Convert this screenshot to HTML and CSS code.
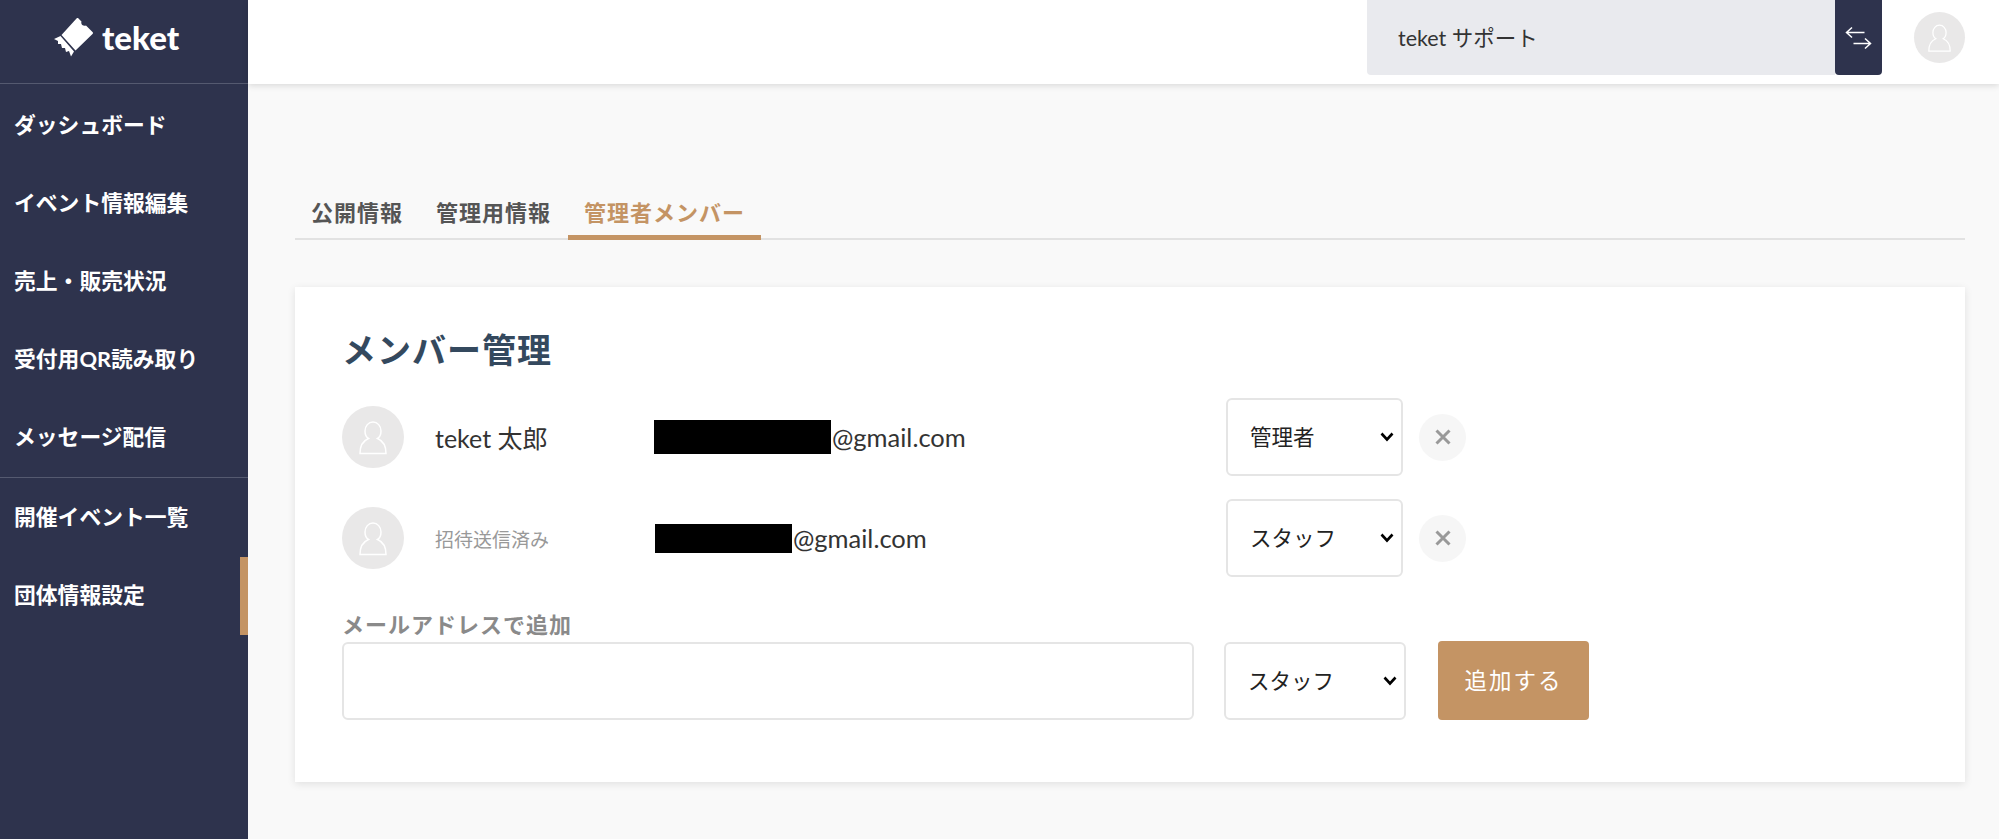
FILE: index.html
```html
<!DOCTYPE html>
<html lang="ja">
<head>
<meta charset="UTF-8">
<title>teket</title>
<link rel="stylesheet" href="styles.css">
</head>
<body>
<svg class="sprites">
    <symbol id="icon-user" viewBox="0 0 62 62">
        <path d="M26.5 32.5 C24 31 23 28 23 25 C23 20 26.5 16 31 16 C35.5 16 39 20 39 25 C39 28 38 31 35.5 32.5 C41.5 35 44 40 44 47.5 H18 C18 40 20.5 35 26.5 32.5 Z" fill="none" stroke="#fff" stroke-width="1.5"/>
    </symbol>
    <symbol id="icon-close" viewBox="0 0 16 16">
        <path d="M1.5 1.5 L14.5 14.5 M14.5 1.5 L1.5 14.5" stroke="#999" stroke-width="3"/>
    </symbol>
</svg>

<div class="app">
    <!-- sidebar -->
    <aside class="sidebar">
        <div class="logo">
            <svg class="logo-mark" viewBox="0 0 39 39">
                <path d="M24 0 L27.5 3.5 C26.5 6 29 8.5 32 7.5 L38.5 14 Q39.5 15 38.5 16 L21.5 32.5 L7.5 17 L22.5 0.5 Q23.2 -0.3 24 0 Z" fill="#fff"/>
                <path d="M6.5 18 L20 33.5 L17 38.5 L15 33 L12 34 L11 30 L8 30 L7 26 L4 26 L4 23 L0 21 Z" fill="#fff"/>
            </svg>
            <span class="logo-text">teket</span>
        </div>
        <nav class="nav">
            <a class="nav-item">ダッシュボード</a>
            <a class="nav-item">イベント情報編集</a>
            <a class="nav-item">売上・販売状況</a>
            <a class="nav-item">受付用QR読み取り</a>
            <a class="nav-item">メッセージ配信</a>
        </nav>
        <nav class="nav nav-sub">
            <a class="nav-item">開催イベント一覧</a>
            <a class="nav-item active">団体情報設定</a>
        </nav>
    </aside>

    <div class="main">
        <header class="topbar">
            <div class="org-select">teket サポート</div>
            <button class="org-switch">
                <svg viewBox="0 0 27 26"><path d="M7 2.5 L1.5 7.5 L7 12.5 M1.5 7.5 H19.5 M20 13.5 L25.5 18.5 L20 23.5 M25.5 18.5 H8.5" fill="none" stroke="#fff" stroke-width="1.5"/></svg>
            </button>
            <div class="avatar avatar-small"><svg><use href="#icon-user"/></svg></div>
        </header>

        <main class="content">
            <div class="tabs">
                <a class="tab">公開情報</a>
                <a class="tab">管理用情報</a>
                <a class="tab active">管理者メンバー</a>
            </div>

            <section class="card">
                <h1 class="card-title">メンバー管理</h1>

                <div class="member">
                    <div class="avatar"><svg><use href="#icon-user"/></svg></div>
                    <div class="member-name">teket 太郎</div>
                    <div class="member-mail"><span class="mask mask-long"></span>@gmail.com</div>
                    <select class="role"><option>管理者</option><option>スタッフ</option></select>
                    <button class="remove"><svg><use href="#icon-close"/></svg></button>
                </div>

                <div class="member">
                    <div class="avatar"><svg><use href="#icon-user"/></svg></div>
                    <div class="member-name pending">招待送信済み</div>
                    <div class="member-mail"><span class="mask mask-short"></span>@gmail.com</div>
                    <select class="role"><option>スタッフ</option><option>管理者</option></select>
                    <button class="remove"><svg><use href="#icon-close"/></svg></button>
                </div>

                <label class="add-label">メールアドレスで追加</label>
                <div class="add-row">
                    <input class="add-input" type="text">
                    <select class="role role-add"><option>スタッフ</option><option>管理者</option></select>
                    <button class="add-btn">追加する</button>
                </div>
            </section>
        </main>
    </div>
</div>
</body>
</html>
```
FILE: styles.css
```css
:root{
    --navy:#2e334d;
    --accent:#c49464;
    --line:#e5e5e5;
}

*{margin:0;padding:0;box-sizing:border-box}
html,body{height:100%;overflow:hidden}
body{
    font-family:Lato,"Noto Sans CJK JP",sans-serif;
    color:#333;
    background:#f9f9f9;
}
.sprites{display:none}

.app{
    display:flex;
    height:839px;
}

/* sidebar -------------- */
.sidebar{
    flex:0 0 248px;
    background:var(--navy);
}
.logo{
    height:84px;
    display:flex;
    align-items:center;
    gap:9px;
    padding:0 0 8px 54px;
    border-bottom:1px solid #555a70;
}
.logo-mark{width:39px;height:39px}
.logo-text{
    font-size:33px;
    font-weight:900;
    color:#fff;
    line-height:1;
}
.nav{
    padding-bottom:3px;
    border-bottom:1px solid #555a70;
}
.nav-sub{
    margin-top:-2px;
    padding-bottom:0;
    border-bottom:0;
}
.nav-item{
    display:flex;
    align-items:center;
    height:78px;
    padding-left:14px;
    font-size:21.8px;
    font-weight:700;
    color:#fff;
}
.nav-item.active{
    margin-top:3px;
    padding-bottom:6px;
    border-right:8px solid var(--accent);
}

/* header --------------- */
.main{
    flex:1;
    min-width:0;
}
.topbar{
    height:84px;
    background:#fff;
    display:flex;
    align-items:flex-start;
    padding-left:1119px;
    box-shadow:0 2px 6px rgba(0,0,0,.12);
}
.org-select{
    width:468px;
    height:75px;
    padding:0 0 2px 31px;
    display:flex;
    align-items:center;
    font-size:21.5px;
    color:#333;
    background:#e9eaee;
    border-radius:0 0 0 4px;
}
.org-switch{
    width:47px;
    height:75px;
    border:0;
    border-radius:0 0 4px 4px;
    background:var(--navy);
    display:flex;
    align-items:center;
    justify-content:center;
}
.org-switch svg{width:27px;height:26px}
.avatar{
    flex:0 0 62px;
    width:62px;
    height:62px;
    border-radius:50%;
    background:#e9e8e8;
}
.avatar svg{display:block;width:100%;height:100%}
.avatar-small{
    flex:0 0 51px;
    width:51px;
    height:51px;
    margin:12px 0 0 32px;
}

/* content -------------- */
.content{
    padding:106px 34px 0 47px;
}
.tabs{
    display:flex;
    gap:1px;
    height:50px;
    border-bottom:2px solid #e2e2e2;
}
.tab{
    height:50px;
    padding:0 16px 3px;
    display:flex;
    align-items:center;
    border-bottom:5px solid transparent;
    font-size:22px;
    font-weight:700;
    letter-spacing:1px;
    color:#555;
}
.tab.active{
    color:var(--accent);
    border-bottom-color:var(--accent);
}

.card{
    margin-top:47px;
    height:495px;
    padding:40px 47px;
    background:#fff;
    box-shadow:0 2px 8px rgba(0,0,0,.1);
}
.card-title{
    font-size:34px;
    font-weight:700;
    letter-spacing:1px;
    line-height:46px;
    color:#34495e;
    margin-bottom:25px;
}

.member{
    display:flex;
    align-items:center;
    height:78px;
    margin-bottom:23px;
}
.member-name{
    flex:0 0 219px;
    margin-left:31px;
    font-size:25px;
    color:#333;
}
.member-name.pending{
    font-size:19px;
    color:#999;
}
.member-mail{
    flex:0 0 572px;
    display:flex;
    align-items:center;
    font-size:25.5px;
    color:#333;
}
.mask{
    display:block;
    background:#000;
    margin-right:1px;
}
.mask-long{width:177px;height:34px}
.mask-short{width:137px;height:29px;margin-left:1px}

.role{
    appearance:none;
    width:177px;
    height:78px;
    padding-left:22px;
    font-family:inherit;
    font-size:21.5px;
    color:#222;
    border:2px solid var(--line);
    border-radius:6px;
    background:#fff url("data:image/svg+xml,%3Csvg xmlns='http://www.w3.org/2000/svg' viewBox='0 0 14 10'%3E%3Cpath d='M1.5 1.5 L7 7.5 L12.5 1.5' fill='none' stroke='%23000' stroke-width='2.6'/%3E%3C/svg%3E") no-repeat right 7px center/14px 10px;
}
.remove{
    width:47px;
    height:47px;
    margin-left:16px;
    border:0;
    border-radius:50%;
    background:#f6f6f6;
    display:flex;
    align-items:center;
    justify-content:center;
}
.remove svg{width:16px;height:16px}

.add-label{
    display:block;
    margin-top:34px;
    font-size:22px;
    font-weight:700;
    letter-spacing:1px;
    line-height:28px;
    color:#8a8a8a;
}
.add-row{
    display:flex;
    align-items:center;
    margin-top:2px;
}
.add-input{
    width:852px;
    height:78px;
    border:2px solid var(--line);
    border-radius:6px;
    background:#fff;
}
.role-add{
    width:182px;
    margin-left:30px;
}
.add-btn{
    width:151px;
    height:79px;
    padding-bottom:3px;
    margin-left:32px;
    border:0;
    border-radius:4px;
    background:var(--accent);
    font-family:inherit;
    font-size:22.5px;
    letter-spacing:2px;
    color:#fff;
}
```
